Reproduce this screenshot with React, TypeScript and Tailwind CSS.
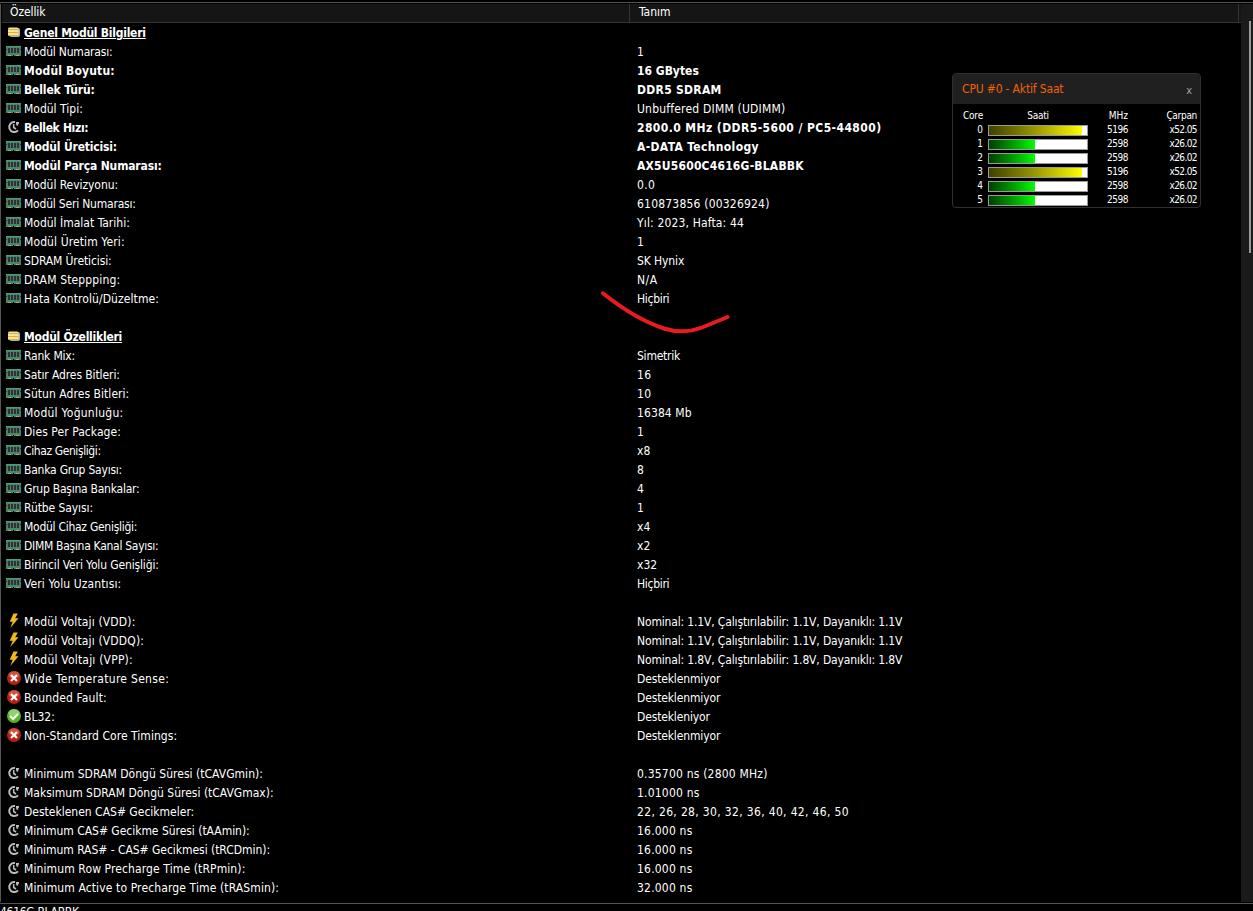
type IconName = "group" | "ram" | "clock" | "bolt" | "error" | "ok";

type Row = {
  icon: IconName;
  label: string;
  value?: string;
  bold?: boolean;
  heading?: boolean;
  labelClass?: string;
  valueClass?: string;
} | null;

const rows: Row[] = [
  { icon: "group", label: "Genel Modül Bilgileri", heading: true, labelClass: "tracking-[-0.24px]" },
  { icon: "ram", label: "Modül Numarası:", value: "1", labelClass: "tracking-[-0.2px]" },
  { icon: "ram", label: "Modül Boyutu:", value: "16 GBytes", bold: true, labelClass: "tracking-[0.17px]" },
  { icon: "ram", label: "Bellek Türü:", value: "DDR5 SDRAM", bold: true, labelClass: "tracking-[-0.14px]", valueClass: "tracking-[0.3px]" },
  { icon: "ram", label: "Modül Tipi:", value: "Unbuffered DIMM (UDIMM)", valueClass: "tracking-[0.2px]" },
  { icon: "clock", label: "Bellek Hızı:", value: "2800.0 MHz (DDR5-5600 / PC5-44800)", bold: true, labelClass: "tracking-[-0.33px]", valueClass: "tracking-[0.42px]" },
  { icon: "ram", label: "Modül Üreticisi:", value: "A-DATA Technology", bold: true, labelClass: "tracking-[-0.18px]", valueClass: "tracking-[0.35px]" },
  { icon: "ram", label: "Modül Parça Numarası:", value: "AX5U5600C4616G-BLABBK", bold: true, labelClass: "tracking-[-0.16px]", valueClass: "tracking-[0.2px]" },
  { icon: "ram", label: "Modül Revizyonu:", value: "0.0", labelClass: "tracking-[-0.06px]", valueClass: "tracking-[0.3px]" },
  { icon: "ram", label: "Modül Seri Numarası:", value: "610873856 (00326924)", labelClass: "tracking-[-0.2px]", valueClass: "tracking-[0.2px]" },
  { icon: "ram", label: "Modül İmalat Tarihi:", value: "Yıl: 2023, Hafta: 44", valueClass: "tracking-[0.15px]" },
  { icon: "ram", label: "Modül Üretim Yeri:", value: "1", labelClass: "tracking-[0.11px]" },
  { icon: "ram", label: "SDRAM Üreticisi:", value: "SK Hynix", labelClass: "tracking-[-0.12px]", valueClass: "tracking-[-0.1px]" },
  { icon: "ram", label: "DRAM Steppping:", value: "N/A", labelClass: "tracking-[0.14px]", valueClass: "tracking-[0.5px]" },
  { icon: "ram", label: "Hata Kontrolü/Düzeltme:", value: "Hiçbiri", labelClass: "tracking-[0.09px]", valueClass: "tracking-[-0.3px]" },
  null,
  { icon: "group", label: "Modül Özellikleri", heading: true, labelClass: "tracking-[-0.24px]" },
  { icon: "ram", label: "Rank Mix:", value: "Simetrik", labelClass: "tracking-[-0.2px]", valueClass: "tracking-[-0.24px]" },
  { icon: "ram", label: "Satır Adres Bitleri:", value: "16", labelClass: "tracking-[-0.1px]", valueClass: "tracking-[0.3px]" },
  { icon: "ram", label: "Sütun Adres Bitleri:", value: "10", labelClass: "tracking-[0.05px]", valueClass: "tracking-[0.3px]" },
  { icon: "ram", label: "Modül Yoğunluğu:", value: "16384 Mb", labelClass: "tracking-[0.25px]", valueClass: "tracking-[0.1px]" },
  { icon: "ram", label: "Dies Per Package:", value: "1", labelClass: "tracking-[0.06px]" },
  { icon: "ram", label: "Cihaz Genişliği:", value: "x8", labelClass: "tracking-[-0.4px]" },
  { icon: "ram", label: "Banka Grup Sayısı:", value: "8", labelClass: "tracking-[-0.22px]" },
  { icon: "ram", label: "Grup Başına Bankalar:", value: "4", labelClass: "tracking-[-0.24px]" },
  { icon: "ram", label: "Rütbe Sayısı:", value: "1", labelClass: "tracking-[-0.08px]" },
  { icon: "ram", label: "Modül Cihaz Genişliği:", value: "x4", labelClass: "tracking-[-0.27px]" },
  { icon: "ram", label: "DIMM Başına Kanal Sayısı:", value: "x2", labelClass: "tracking-[-0.29px]" },
  { icon: "ram", label: "Birincil Veri Yolu Genişliği:", value: "x32", labelClass: "tracking-[-0.14px]" },
  { icon: "ram", label: "Veri Yolu Uzantısı:", value: "Hiçbiri", labelClass: "tracking-[0.1px]", valueClass: "tracking-[-0.3px]" },
  null,
  { icon: "bolt", label: "Modül Voltajı (VDD):", value: "Nominal: 1.1V, Çalıştırılabilir: 1.1V, Dayanıklı: 1.1V", labelClass: "tracking-[0.15px]", valueClass: "tracking-[-0.15px]" },
  { icon: "bolt", label: "Modül Voltajı (VDDQ):", value: "Nominal: 1.1V, Çalıştırılabilir: 1.1V, Dayanıklı: 1.1V", labelClass: "tracking-[0.15px]", valueClass: "tracking-[-0.15px]" },
  { icon: "bolt", label: "Modül Voltajı (VPP):", value: "Nominal: 1.8V, Çalıştırılabilir: 1.8V, Dayanıklı: 1.8V", labelClass: "tracking-[0.2px]", valueClass: "tracking-[-0.15px]" },
  { icon: "error", label: "Wide Temperature Sense:", value: "Desteklenmiyor", labelClass: "tracking-[0.3px]", valueClass: "tracking-[-0.14px]" },
  { icon: "error", label: "Bounded Fault:", value: "Desteklenmiyor", labelClass: "tracking-[0.14px]", valueClass: "tracking-[-0.14px]" },
  { icon: "ok", label: "BL32:", value: "Destekleniyor", valueClass: "tracking-[-0.14px]" },
  { icon: "error", label: "Non-Standard Core Timings:", value: "Desteklenmiyor", labelClass: "tracking-[0.04px]", valueClass: "tracking-[-0.14px]" },
  null,
  { icon: "clock", label: "Minimum SDRAM Döngü Süresi (tCAVGmin):", value: "0.35700 ns (2800 MHz)", labelClass: "tracking-[0.03px]", valueClass: "tracking-[0.2px]" },
  { icon: "clock", label: "Maksimum SDRAM Döngü Süresi (tCAVGmax):", value: "1.01000 ns", valueClass: "tracking-[0.2px]" },
  { icon: "clock", label: "Desteklenen CAS# Gecikmeler:", value: "22, 26, 28, 30, 32, 36, 40, 42, 46, 50", valueClass: "tracking-[0.34px]" },
  { icon: "clock", label: "Minimum CAS# Gecikme Süresi (tAAmin):", value: "16.000 ns", labelClass: "tracking-[-0.03px]", valueClass: "tracking-[0.2px]" },
  { icon: "clock", label: "Minimum RAS# - CAS# Gecikmesi (tRCDmin):", value: "16.000 ns", labelClass: "tracking-[-0.04px]", valueClass: "tracking-[0.2px]" },
  { icon: "clock", label: "Minimum Row Precharge Time (tRPmin):", value: "16.000 ns", labelClass: "tracking-[0.11px]", valueClass: "tracking-[0.2px]" },
  { icon: "clock", label: "Minimum Active to Precharge Time (tRASmin):", value: "32.000 ns", labelClass: "tracking-[0.12px]", valueClass: "tracking-[0.2px]" },
];

const cores = [
  { mhz: 5196, ratio: "x52.05", boost: true },
  { mhz: 2598, ratio: "x26.02", boost: false },
  { mhz: 2598, ratio: "x26.02", boost: false },
  { mhz: 5196, ratio: "x52.05", boost: true },
  { mhz: 2598, ratio: "x26.02", boost: false },
  { mhz: 2598, ratio: "x26.02", boost: false },
];

const RowIcon = ({ name }: { name: IconName }) => {
  switch (name) {
    case "group":
      return (
        <svg className="block" width="16" height="16" viewBox="0 0 16 16">
          <rect x="3.5" y="4" width="10.5" height="9" rx="2" fill="#b5b5b5" />
          <rect x="2" y="3.5" width="10.5" height="8.5" rx="1.5" fill="#f7e3a0" />
          <path d="M2 5.5h10.5M2 8.5h10.5M3 11.5h9.5" stroke="#e0b030" />
        </svg>
      );
    case "ram":
      return (
        <svg className="block" width="16" height="16" viewBox="0 0 16 16">
          <path d="M0 3h15v10H8v-1H7v1H0z" fill="#3f8a68" />
          <path d="M0 3h15v1H0z" fill="#519a78" />
          <path d="M1 5h13v5H1z" fill="#55776b" />
          <path d="M2 5h2v5H2zM5 5h2v5H5zM8 5h2v5H8zM11 5h2v5h-2z" fill="#2e3235" />
          <path d="M0 6h1v1H0zM14 6h1v1h-1z" fill="#1d4031" />
          <path d="M2 12h3v1H2zM10 12h3v1h-3z" fill="#d9965a" />
        </svg>
      );
    case "clock":
      return (
        <svg className="block" width="16" height="16" viewBox="0 0 16 16" fill="none" stroke="#bdbdbd">
          <path d="M9 3.1A5 5 0 1 0 12 11.3" strokeWidth="2" />
          <path d="M7.7 5v3.5l2.3 1.5" strokeWidth="1.5" />
          <path d="M10 3h3v1.5l-.8.5v1.8h-1.4L10 5z" fill="#bdbdbd" stroke="none" />
        </svg>
      );
    case "bolt":
      return (
        <svg className="block" width="16" height="16" viewBox="0 0 16 16">
          <path d="M7.5 0.5h4.3L9.2 5.3h3.3L4.3 15l2.4-6.3H3.7z" fill="#f0b91e" />
        </svg>
      );
    case "error":
      return (
        <svg className="block" width="16" height="16" viewBox="0 0 16 16">
          <circle cx="8" cy="8" r="7" fill="#b8200f" />
          <ellipse cx="8" cy="5" rx="5.5" ry="3.8" fill="#cf5342" />
          <path d="M5 5l6 6M11 5l-6 6" stroke="#fff" strokeWidth="2.2" />
        </svg>
      );
    case "ok":
      return (
        <svg className="block" width="16" height="16" viewBox="0 0 16 16">
          <circle cx="8" cy="8" r="7" fill="#55b51c" />
          <ellipse cx="8" cy="5" rx="5.5" ry="3.8" fill="#8fd070" />
          <path d="M4 8l3 3 5-5" fill="none" stroke="#fff" strokeWidth="2.2" />
        </svg>
      );
  }
};

const DetailRow = ({ row }: { row: Row }) => {
  if (!row) return <div className="h-[19px]" />;

  return (
    <div className={`flex h-[19px] items-start leading-[20px] ${row.bold || row.heading ? "font-bold" : ""}`}>
      <div className="flex w-[635px] items-start pl-1">
        <div className="mr-0.5 h-[19px] w-4 pt-px">
          <RowIcon name={row.icon} />
        </div>
        <span className={`${row.heading ? "underline underline-offset-1" : ""} ${row.labelClass ?? ""}`}>
          {row.label}
        </span>
      </div>
      <span className={row.valueClass}>{row.value}</span>
    </div>
  );
};

const ClockPanel = () => {
  return (
    <div className="absolute left-[952px] top-[73px] h-[135px] w-[249px] overflow-hidden rounded border border-[#303030] bg-black">
      <div className="flex h-[30px] items-center justify-between bg-[#202020] pl-[9px] pr-2 text-[12px] text-[#f26005]">
        <span className="tracking-[-0.16px]">CPU #0 - Aktif Saat</span>
        <span className="pt-[3px] text-[11px] leading-none text-[#a0a0a0]">x</span>
      </div>
      <div className="pt-[5px] text-[10px] leading-[14px]">
        <div className="flex h-[14px]">
          <span className="w-[30px] text-right tracking-[-0.2px]">Core</span>
          <span className="ml-[5px] w-[100px] text-center tracking-[-0.3px]">Saati</span>
          <span className="w-[40px] text-right">MHz</span>
          <span className="w-[69px] text-right tracking-[-0.3px]">Çarpan</span>
        </div>
        {cores.map((core, i) => (
          <div key={i} className="flex h-[14px] items-center">
            <span className="w-[30px] text-right">{i}</span>
            <div className="ml-[5px] h-[11px] w-[100px] border border-[#999] bg-white">
              <div
                className={
                  core.boost
                    ? "h-full w-[93px] bg-linear-to-r from-[#404000] to-[#ffff00]"
                    : "h-full w-[46px] bg-linear-to-r from-[#004000] to-[#00ff00]"
                }
              />
            </div>
            <span className="w-[40px] text-right tracking-[-0.5px]">{core.mhz}</span>
            <span className="w-[69px] text-right tracking-[-0.6px]">{core.ratio}</span>
          </div>
        ))}
      </div>
    </div>
  );
};

export default function App() {
  return (
    <div className="relative flex h-[911px] w-[1253px] flex-col overflow-hidden whitespace-nowrap bg-black font-['DejaVu_Sans_Condensed','DejaVu_Sans',sans-serif] text-[12px] leading-[19px] text-white">
      <div className="mt-[2px] h-px shrink-0 bg-[#555]" />

      <div className="mt-px flex h-[898px] shrink-0">
        <div className="w-[1241px] border-l border-[#555]">
          {/* Column titles */}
          <div className="ml-px flex h-[19px] w-[1239px] border-b border-[#333] bg-[#151515] leading-4">
            <div className="w-[628px] border-r border-[#333] pl-2 tracking-[-0.1px]">Özellik</div>
            <div className="w-[609px] border-r border-[#333] pl-[9px]">Tanım</div>
          </div>
          <div className="pl-px">
            {rows.map((row, i) => (
              <DetailRow key={i} row={row} />
            ))}
          </div>
        </div>

        {/* Scrollbar */}
        <div className="flex w-3 justify-end bg-[#1a1a1a] pr-[2px] pt-[17px]">
          <div className="h-[232px] w-[2px] bg-[#999]" />
        </div>
      </div>

      <div className="mt-px h-px shrink-0 bg-[#555]" />
      <div className="h-[7px] shrink-0 overflow-hidden leading-[17px] tracking-[-0.3px]">
        <span>4616G-BLABBK</span>
      </div>

      <ClockPanel />

      {/* Red pen stroke */}
      <svg className="absolute left-[600px] top-[288px]" width="132" height="48" fill="none">
        <path
          d="M3 5.3C20 19 41 33 64 40.5C78 45 90 44 102 39.5L127.5 29"
          stroke="#e81b1e"
          strokeWidth="4"
          strokeLinecap="round"
          strokeLinejoin="round"
        />
      </svg>
    </div>
  );
}
